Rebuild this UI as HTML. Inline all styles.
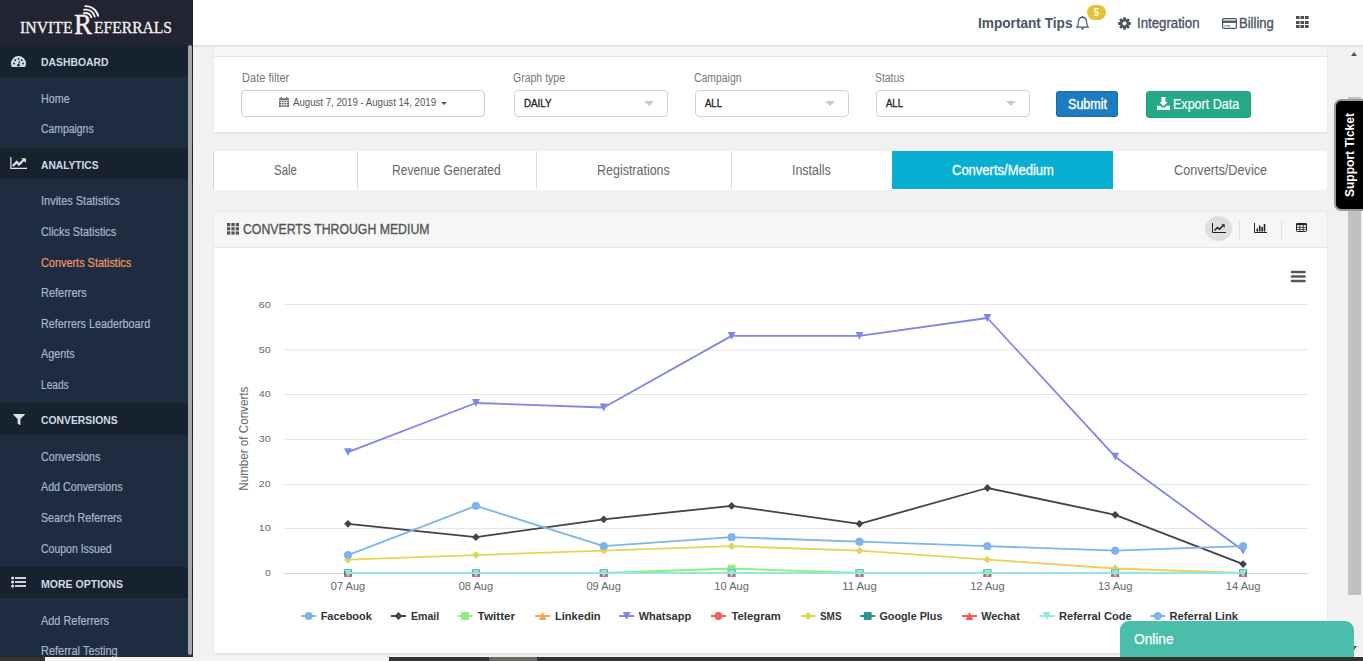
<!DOCTYPE html>
<html lang="en"><head><meta charset="utf-8"><title>InviteReferrals - Converts Statistics</title>
<style>
html,body{margin:0;padding:0}
body{width:1363px;height:661px;overflow:hidden;background:#f1f1f1;position:relative;font-family:'Liberation Sans',sans-serif;}
.abs{position:absolute}
.t{position:absolute;height:0;line-height:0;white-space:nowrap;transform-origin:0 0;display:block}
#sidebar{position:absolute;left:0;top:0;width:193px;height:657px;background:#1e2c3f;overflow:hidden}
#sidebar .logo{position:absolute;left:0;top:0;width:193px;height:45px;background:#222433}
#sidebar .hd{position:absolute;left:0;width:193px;background:#16232f}
#sidebar .thumb{position:absolute;left:188px;top:45px;width:4px;height:610px;background:#a6a6a6;border-radius:2px}
#topbar{position:absolute;left:193px;top:0;width:1170px;height:45px;background:#fff;box-shadow:0 1px 2px rgba(0,0,0,.13)}
.panel{position:absolute;left:214px;width:1113px;background:#fff;box-shadow:0 1px 2px rgba(0,0,0,.09)}
.phead{position:absolute;left:0;top:0;width:100%;background:#f5f6f6;border-bottom:1px solid #e4e5e5;box-sizing:border-box}
.sel{position:absolute;top:90px;height:27px;width:154px;box-sizing:border-box;border:1px solid #c9d3e6;border-radius:4px;background:#fff}
.sel i{position:absolute;right:13px;top:10px;width:0;height:0;border-left:5.5px solid transparent;border-right:5.5px solid transparent;border-top:5px solid #c3c8d2}
.btn{position:absolute;border-radius:3px;box-sizing:border-box}
.tab{position:absolute;top:0;height:38px;box-sizing:border-box;border-left:1px solid #dcdcdc}
#tabs .tab:first-child{border-left:none}
</style></head>
<body>
<div class="panel" style="top:21px;height:111px"><div class="phead" style="height:36px"></div></div>
<span class="t" style="left:241.5px;top:78px;font-size:12px;color:#777;transform:scaleX(0.9211);">Date filter</span><span class="t" style="left:513.0px;top:78px;font-size:12px;color:#777;transform:scaleX(0.8759);">Graph type</span><span class="t" style="left:693.8px;top:78px;font-size:12px;color:#777;transform:scaleX(0.8684);">Campaign</span><span class="t" style="left:874.5px;top:78px;font-size:12px;color:#777;transform:scaleX(0.8671);">Status</span><div class="abs" style="left:241px;top:90px;width:244px;height:27px;box-sizing:border-box;border:1px solid #ccc;border-radius:4px;background:#fff"></div><svg class="abs" style="left:279px;top:97px" width="10" height="10" viewBox="0 0 10 10"><path d="M0 1.300h10V10H0z" fill="#666"/><path d="M1.800 0h1.200v2.400H1.800zM7 0h1.200v2.400H7z" fill="#666"/><g stroke="#fff" stroke-width=".7"><path d="M0 3.400h10M.6 5.500h8.800M.6 7.700h8.800M2.700 3.400V10M5 3.400V10M7.300 3.400V10"/></g></svg><span class="t" style="left:293.0px;top:102px;font-size:11px;color:#555;transform:scaleX(0.8757);">August 7, 2019 - August 14, 2019</span><div class="abs" style="left:440.500px;top:101.500px;width:0;height:0;border-left:3px solid transparent;border-right:3px solid transparent;border-top:3px solid #555"></div><div class="sel" style="left:514px"><i></i></div><span class="t" style="left:524.4px;top:104px;font-size:10px;color:#222;transform:scaleX(0.9766);-webkit-text-stroke:0.3px #222;">DAILY</span><div class="sel" style="left:695px"><i></i></div><span class="t" style="left:705.4px;top:104px;font-size:10px;color:#222;transform:scaleX(0.9554);-webkit-text-stroke:0.3px #222;">ALL</span><div class="sel" style="left:876px"><i></i></div><span class="t" style="left:886.4px;top:104px;font-size:10px;color:#222;transform:scaleX(0.9554);-webkit-text-stroke:0.3px #222;">ALL</span><div class="btn" style="left:1056px;top:91px;width:62px;height:26px;background:#1d7bbf;border:1px dashed #1a5f96"></div><span class="t" style="left:1067.6px;top:104px;font-size:14px;color:#fff;transform:scaleX(0.8974);-webkit-text-stroke:0.4px #fff;">Submit</span><div class="btn" style="left:1146px;top:91px;width:105px;height:27px;background:#26a987;border:1px solid #23a07f"></div><svg class="abs" style="left:1157px;top:97px" width="13" height="13" viewBox="0 0 13 13"><path d="M4.500 0h4v4.900h2.200L6.500 9.300 2.300 4.900h2.200z" fill="#fff"/><path d="M0 8.800h3.300l1.700 1.700h3l1.700-1.700H13V13H0z" fill="#fff"/></svg><span class="t" style="left:1173.0px;top:104px;font-size:15px;color:#fff;transform:scaleX(0.8358);-webkit-text-stroke:0.2px #fff;">Export Data</span><div class="panel" id="tabs" style="top:151px;height:39px;border-radius:0 4px 4px 0;box-shadow:none;border-left:1px solid #d6d6d6;left:213px"><div class="tab" style="left:0px;width:143px;"></div><div class="tab" style="left:143px;width:179px;"></div><div class="tab" style="left:322px;width:195px;"></div><div class="tab" style="left:517px;width:161px;"></div><div class="tab" style="left:678px;width:221px;background:#09afd3;border-left:none;"></div><div class="tab" style="left:899px;width:214px;border-left:none;"></div></div>
<span class="t" style="left:273.6px;top:170px;font-size:14px;color:#666;transform:scaleX(0.8173);">Sale</span><span class="t" style="left:392.0px;top:170px;font-size:14px;color:#666;transform:scaleX(0.8613);">Revenue Generated</span><span class="t" style="left:596.9px;top:170px;font-size:14px;color:#666;transform:scaleX(0.8910);">Registrations</span><span class="t" style="left:791.8px;top:170px;font-size:14px;color:#666;transform:scaleX(0.8882);">Installs</span><span class="t" style="left:951.9px;top:170px;font-size:14px;color:#fff;transform:scaleX(0.9289);-webkit-text-stroke:0.3px #fff;">Converts/Medium</span><span class="t" style="left:1174.3px;top:170px;font-size:14px;color:#666;transform:scaleX(0.9065);">Converts/Device</span><div class="panel" id="chartpanel" style="top:211px;height:442px"><div class="phead" style="height:37px;border-top:1px solid #e9eaea"></div></div>
<svg class="abs" style="left:227px;top:222.800px" width="12" height="12" viewBox="0 0 12 12"><g fill="#555"><rect x="0" y="0" width="3.300" height="3.200"/><rect x="4.350" y="0" width="3.300" height="3.200"/><rect x="8.700" y="0" width="3.300" height="3.200"/><rect x="0" y="4.200" width="3.300" height="3.200"/><rect x="4.350" y="4.200" width="3.300" height="3.200"/><rect x="8.700" y="4.200" width="3.300" height="3.200"/><rect x="0" y="8.400" width="3.300" height="3.200"/><rect x="4.350" y="8.400" width="3.300" height="3.200"/><rect x="8.700" y="8.400" width="3.300" height="3.200"/></g></svg><span class="t" style="left:243.0px;top:229px;font-size:14px;color:#555;transform:scaleX(0.8772);-webkit-text-stroke:0.35px #555;">CONVERTS THROUGH MEDIUM</span><div class="abs" style="left:1205px;top:216px;width:27px;height:25px;border-radius:50%;background:#dfdfdf"></div><svg class="abs" style="left:1212px;top:223px" width="14" height="10" viewBox="0 0 14 10"><path d="M.5 0v9.500H14" fill="none" stroke="#222" stroke-width="1"/><path d="M2.500 7.500l3-3 2 1.800 3.400-3.500" fill="none" stroke="#222" stroke-width="1.500"/><path d="M9.300 1.300h3.400v3.400z" fill="#222"/></svg><div class="abs" style="left:1239px;top:221px;width:1px;height:18px;background:#dddfe5"></div><svg class="abs" style="left:1254px;top:223px" width="13" height="10" viewBox="0 0 13 10"><path d="M.5 0v9.500H13" fill="none" stroke="#222" stroke-width="1"/><g fill="#222"><rect x="2.500" y="5.500" width="1.600" height="3"/><rect x="4.900" y="2.500" width="1.600" height="6"/><rect x="7.300" y="4" width="1.600" height="4.500"/><rect x="9.700" y="1" width="1.600" height="7.500"/></g></svg><div class="abs" style="left:1281px;top:221px;width:1px;height:18px;background:#dddfe5"></div><svg class="abs" style="left:1296px;top:223px" width="11" height="9" viewBox="0 0 11 9"><rect x=".5" y=".5" width="10" height="8" rx=".8" fill="#fff" stroke="#222" stroke-width="1"/><path d="M0 .5h11v1.600H0z" fill="#222"/><path d="M.5 4.300h10M.5 6.400h10M3.800 2V8.500M7.200 2V8.500" stroke="#222" stroke-width=".8" fill="none"/></svg><svg class="abs" id="chart" style="left:214px;top:248px" width="1113" height="405" viewBox="214 248 1113 405" font-family="Liberation Sans, sans-serif"><path d="M284 528.5H1308" stroke="#e6e6e6" stroke-width="1"/><path d="M284 484.5H1308" stroke="#e6e6e6" stroke-width="1"/><path d="M284 439.4H1308" stroke="#e6e6e6" stroke-width="1"/><path d="M284 394.5H1308" stroke="#e6e6e6" stroke-width="1"/><path d="M284 349.9H1308" stroke="#e6e6e6" stroke-width="1"/><path d="M284 304.5H1308" stroke="#e6e6e6" stroke-width="1"/><path d="M284 573.5H1308" stroke="#ccd6eb" stroke-width="1"/><text x="270.6" y="575.8" text-anchor="end" font-size="9.600" fill="#666" textLength="5.7" lengthAdjust="spacingAndGlyphs">0</text><text x="270.6" y="530.9" text-anchor="end" font-size="9.600" fill="#666" textLength="11.9" lengthAdjust="spacingAndGlyphs">10</text><text x="270.6" y="486.9" text-anchor="end" font-size="9.600" fill="#666" textLength="11.9" lengthAdjust="spacingAndGlyphs">20</text><text x="270.6" y="441.9" text-anchor="end" font-size="9.600" fill="#666" textLength="11.9" lengthAdjust="spacingAndGlyphs">30</text><text x="270.6" y="396.9" text-anchor="end" font-size="9.600" fill="#666" textLength="11.9" lengthAdjust="spacingAndGlyphs">40</text><text x="270.6" y="352.8" text-anchor="end" font-size="9.600" fill="#666" textLength="11.9" lengthAdjust="spacingAndGlyphs">50</text><text x="270.6" y="307.7" text-anchor="end" font-size="9.600" fill="#666" textLength="11.9" lengthAdjust="spacingAndGlyphs">60</text><text transform="translate(247.8 438.7) rotate(-90)" text-anchor="middle" font-size="12" fill="#666" textLength="104.0" lengthAdjust="spacingAndGlyphs">Number of Converts</text><text x="348.0" y="590.4" text-anchor="middle" font-size="10" fill="#666" textLength="34.5" lengthAdjust="spacingAndGlyphs">07 Aug</text><text x="475.9" y="590.4" text-anchor="middle" font-size="10" fill="#666" textLength="34.5" lengthAdjust="spacingAndGlyphs">08 Aug</text><text x="603.7" y="590.4" text-anchor="middle" font-size="10" fill="#666" textLength="34.5" lengthAdjust="spacingAndGlyphs">09 Aug</text><text x="731.6" y="590.4" text-anchor="middle" font-size="10" fill="#666" textLength="34.5" lengthAdjust="spacingAndGlyphs">10 Aug</text><text x="859.5" y="590.4" text-anchor="middle" font-size="10" fill="#666" textLength="34.5" lengthAdjust="spacingAndGlyphs">11 Aug</text><text x="987.4" y="590.4" text-anchor="middle" font-size="10" fill="#666" textLength="34.5" lengthAdjust="spacingAndGlyphs">12 Aug</text><text x="1115.2" y="590.4" text-anchor="middle" font-size="10" fill="#666" textLength="34.5" lengthAdjust="spacingAndGlyphs">13 Aug</text><text x="1243.1" y="590.4" text-anchor="middle" font-size="10" fill="#666" textLength="34.5" lengthAdjust="spacingAndGlyphs">14 Aug</text><g><circle cx="348.0" cy="555.1" r="3.9" fill="#7cb5ec"/><circle cx="475.9" cy="505.9" r="3.9" fill="#7cb5ec"/><circle cx="603.7" cy="546.2" r="3.9" fill="#7cb5ec"/><circle cx="731.6" cy="537.2" r="3.9" fill="#7cb5ec"/><circle cx="859.5" cy="541.7" r="3.9" fill="#7cb5ec"/><circle cx="987.4" cy="546.2" r="3.9" fill="#7cb5ec"/><circle cx="1115.2" cy="550.6" r="3.9" fill="#7cb5ec"/><circle cx="1243.1" cy="546.2" r="3.9" fill="#7cb5ec"/></g><g><path d="M348.0 523.8L475.9 537.2M475.9 537.2L603.7 519.3M603.7 519.3L731.6 505.9M731.6 505.9L859.5 523.8M859.5 523.8L987.4 488.0M987.4 488.0L1115.2 514.8M1115.2 514.8L1243.1 564.1" fill="none" stroke="#434348" stroke-width="1.800" stroke-linejoin="round" stroke-linecap="round"/><path d="M348.0 519.9L351.9 523.8L348.0 527.7L344.1 523.8Z" fill="#434348"/><path d="M475.9 533.3L479.8 537.2L475.9 541.1L472.0 537.2Z" fill="#434348"/><path d="M603.7 515.4L607.6 519.3L603.7 523.2L599.8 519.3Z" fill="#434348"/><path d="M731.6 502.0L735.5 505.9L731.6 509.8L727.7 505.9Z" fill="#434348"/><path d="M859.5 519.9L863.4 523.8L859.5 527.7L855.6 523.8Z" fill="#434348"/><path d="M987.4 484.1L991.2 488.0L987.4 491.9L983.5 488.0Z" fill="#434348"/><path d="M1115.2 510.9L1119.1 514.8L1115.2 518.7L1111.3 514.8Z" fill="#434348"/><path d="M1243.1 560.2L1247.0 564.1L1243.1 568.0L1239.2 564.1Z" fill="#434348"/></g><g><path d="M603.7 573.0L731.6 568.5M731.6 568.5L859.5 573.0" fill="none" stroke="#90ed7d" stroke-width="1.800" stroke-linejoin="round" stroke-linecap="round"/><rect x="344.1" y="569.1" width="7.8" height="7.8" fill="#90ed7d"/><rect x="472.0" y="569.1" width="7.8" height="7.8" fill="#90ed7d"/><rect x="599.8" y="569.1" width="7.8" height="7.8" fill="#90ed7d"/><rect x="727.7" y="564.6" width="7.8" height="7.8" fill="#90ed7d"/><rect x="855.6" y="569.1" width="7.8" height="7.8" fill="#90ed7d"/><rect x="983.5" y="569.1" width="7.8" height="7.8" fill="#90ed7d"/><rect x="1111.3" y="569.1" width="7.8" height="7.8" fill="#90ed7d"/><rect x="1239.2" y="569.1" width="7.8" height="7.8" fill="#90ed7d"/></g><g><path d="M348.0 569.1L351.9 576.9L344.1 576.9Z" fill="#f7a35c"/><path d="M475.9 569.1L479.8 576.9L472.0 576.9Z" fill="#f7a35c"/><path d="M603.7 569.1L607.6 576.9L599.8 576.9Z" fill="#f7a35c"/><path d="M731.6 569.1L735.5 576.9L727.7 576.9Z" fill="#f7a35c"/><path d="M859.5 569.1L863.4 576.9L855.6 576.9Z" fill="#f7a35c"/><path d="M987.4 569.1L991.2 576.9L983.5 576.9Z" fill="#f7a35c"/><path d="M1115.2 569.1L1119.1 576.9L1111.3 576.9Z" fill="#f7a35c"/><path d="M1243.1 569.1L1247.0 576.9L1239.2 576.9Z" fill="#f7a35c"/></g><g><path d="M348.0 452.2L475.9 403.0M475.9 403.0L603.7 407.5M603.7 407.5L731.6 335.9M731.6 335.9L859.5 335.9M859.5 335.9L987.4 318.0M987.4 318.0L1115.2 456.7M1115.2 456.7L1243.1 550.6" fill="none" stroke="#8085e9" stroke-width="1.800" stroke-linejoin="round" stroke-linecap="round"/><path d="M344.1 448.3L351.9 448.3L348.0 456.1Z" fill="#8085e9"/><path d="M472.0 399.1L479.8 399.1L475.9 406.9Z" fill="#8085e9"/><path d="M599.8 403.6L607.6 403.6L603.7 411.4Z" fill="#8085e9"/><path d="M727.7 332.0L735.5 332.0L731.6 339.8Z" fill="#8085e9"/><path d="M855.6 332.0L863.4 332.0L859.5 339.8Z" fill="#8085e9"/><path d="M983.5 314.1L991.2 314.1L987.4 321.9Z" fill="#8085e9"/><path d="M1111.3 452.8L1119.1 452.8L1115.2 460.6Z" fill="#8085e9"/><path d="M1239.2 546.7L1247.0 546.7L1243.1 554.5Z" fill="#8085e9"/></g><g><circle cx="348.0" cy="573.0" r="3.9" fill="#ef6062"/><circle cx="475.9" cy="573.0" r="3.9" fill="#ef6062"/><circle cx="603.7" cy="573.0" r="3.9" fill="#ef6062"/><circle cx="731.6" cy="573.0" r="3.9" fill="#ef6062"/><circle cx="859.5" cy="573.0" r="3.9" fill="#ef6062"/><circle cx="987.4" cy="573.0" r="3.9" fill="#ef6062"/><circle cx="1115.2" cy="573.0" r="3.9" fill="#ef6062"/><circle cx="1243.1" cy="573.0" r="3.9" fill="#ef6062"/></g><g><path d="M348.0 559.6L475.9 555.1M475.9 555.1L603.7 550.6M603.7 550.6L731.6 546.2M731.6 546.2L859.5 550.6M859.5 550.6L987.4 559.6M987.4 559.6L1115.2 568.5M1115.2 568.5L1243.1 573.0" fill="none" stroke="#e4d354" stroke-width="1.800" stroke-linejoin="round" stroke-linecap="round"/><path d="M348.0 555.7L351.9 559.6L348.0 563.5L344.1 559.6Z" fill="#e4d354"/><path d="M475.9 551.2L479.8 555.1L475.9 559.0L472.0 555.1Z" fill="#e4d354"/><path d="M603.7 546.7L607.6 550.6L603.7 554.5L599.8 550.6Z" fill="#e4d354"/><path d="M731.6 542.3L735.5 546.2L731.6 550.1L727.7 546.2Z" fill="#e4d354"/><path d="M859.5 546.7L863.4 550.6L859.5 554.5L855.6 550.6Z" fill="#e4d354"/><path d="M987.4 555.7L991.2 559.6L987.4 563.5L983.5 559.6Z" fill="#e4d354"/><path d="M1115.2 564.6L1119.1 568.5L1115.2 572.4L1111.3 568.5Z" fill="#e4d354"/><path d="M1243.1 569.1L1247.0 573.0L1243.1 576.9L1239.2 573.0Z" fill="#e4d354"/></g><g><rect x="344.1" y="569.1" width="7.8" height="7.8" fill="#2b908f"/><rect x="472.0" y="569.1" width="7.8" height="7.8" fill="#2b908f"/><rect x="599.8" y="569.1" width="7.8" height="7.8" fill="#2b908f"/><rect x="727.7" y="569.1" width="7.8" height="7.8" fill="#2b908f"/><rect x="855.6" y="569.1" width="7.8" height="7.8" fill="#2b908f"/><rect x="983.5" y="569.1" width="7.8" height="7.8" fill="#2b908f"/><rect x="1111.3" y="569.1" width="7.8" height="7.8" fill="#2b908f"/><rect x="1239.2" y="569.1" width="7.8" height="7.8" fill="#2b908f"/></g><g><path d="M348.0 569.1L351.9 576.9L344.1 576.9Z" fill="#f45b5b"/><path d="M475.9 569.1L479.8 576.9L472.0 576.9Z" fill="#f45b5b"/><path d="M603.7 569.1L607.6 576.9L599.8 576.9Z" fill="#f45b5b"/><path d="M731.6 569.1L735.5 576.9L727.7 576.9Z" fill="#f45b5b"/><path d="M859.5 569.1L863.4 576.9L855.6 576.9Z" fill="#f45b5b"/><path d="M987.4 569.1L991.2 576.9L983.5 576.9Z" fill="#f45b5b"/><path d="M1115.2 569.1L1119.1 576.9L1111.3 576.9Z" fill="#f45b5b"/><path d="M1243.1 569.1L1247.0 576.9L1239.2 576.9Z" fill="#f45b5b"/></g><g><path d="M348.0 573.0L475.9 573.0M475.9 573.0L603.7 573.0M603.7 573.0L731.6 573.0M731.6 573.0L859.5 573.0M859.5 573.0L987.4 573.0M987.4 573.0L1115.2 573.0M1115.2 573.0L1243.1 573.0" fill="none" stroke="#91e8e1" stroke-width="1.800" stroke-linejoin="round" stroke-linecap="round"/><path d="M344.0 569.6L352.0 569.6L348.0 577.2Z" fill="#91e8e1"/><path d="M471.9 569.6L479.9 569.6L475.9 577.2Z" fill="#91e8e1"/><path d="M599.7 569.6L607.7 569.6L603.7 577.2Z" fill="#91e8e1"/><path d="M727.6 569.6L735.6 569.6L731.6 577.2Z" fill="#91e8e1"/><path d="M855.5 569.6L863.5 569.6L859.5 577.2Z" fill="#91e8e1"/><path d="M983.4 569.6L991.4 569.6L987.4 577.2Z" fill="#91e8e1"/><path d="M1111.2 569.6L1119.2 569.6L1115.2 577.2Z" fill="#91e8e1"/><path d="M1239.1 569.6L1247.1 569.6L1243.1 577.2Z" fill="#91e8e1"/></g><g><path d="M348.0 555.1L475.9 505.9M475.9 505.9L603.7 546.2M603.7 546.2L731.6 537.2M731.6 537.2L859.5 541.7M859.5 541.7L987.4 546.2M987.4 546.2L1115.2 550.6M1115.2 550.6L1243.1 546.2" fill="none" stroke="#7cb5ec" stroke-width="1.800" stroke-linejoin="round" stroke-linecap="round"/><circle cx="348.0" cy="555.1" r="3.9" fill="#7cb5ec"/><circle cx="475.9" cy="505.9" r="3.9" fill="#7cb5ec"/><circle cx="603.7" cy="546.2" r="3.9" fill="#7cb5ec"/><circle cx="731.6" cy="537.2" r="3.9" fill="#7cb5ec"/><circle cx="859.5" cy="541.7" r="3.9" fill="#7cb5ec"/><circle cx="987.4" cy="546.2" r="3.9" fill="#7cb5ec"/><circle cx="1115.2" cy="550.6" r="3.9" fill="#7cb5ec"/><circle cx="1243.1" cy="546.2" r="3.9" fill="#7cb5ec"/></g><path d="M301.2 616H316.2" stroke="#7cb5ec" stroke-width="2"/><circle cx="308.7" cy="616.0" r="3.9" fill="#7cb5ec"/><text x="320.7" y="620" font-size="11.500" font-weight="700" fill="#333" textLength="51.1" lengthAdjust="spacingAndGlyphs">Facebook</text><path d="M391.0 616H406.0" stroke="#434348" stroke-width="2"/><path d="M398.5 612.1L402.4 616.0L398.5 619.9L394.6 616.0Z" fill="#434348"/><text x="411" y="620" font-size="11.500" font-weight="700" fill="#333" textLength="28.2" lengthAdjust="spacingAndGlyphs">Email</text><path d="M457.6 616H472.6" stroke="#90ed7d" stroke-width="2"/><rect x="461.2" y="612.1" width="7.8" height="7.8" fill="#90ed7d"/><text x="477.6" y="620" font-size="11.500" font-weight="700" fill="#333" textLength="37.6" lengthAdjust="spacingAndGlyphs">Twitter</text><path d="M535.2 616H550.2" stroke="#f7a35c" stroke-width="2"/><path d="M542.7 612.1L546.6 619.9L538.8 619.9Z" fill="#f7a35c"/><text x="554.9" y="620" font-size="11.500" font-weight="700" fill="#333" textLength="45.7" lengthAdjust="spacingAndGlyphs">Linkedin</text><path d="M619.2 616H634.2" stroke="#8085e9" stroke-width="2"/><path d="M622.8 612.1L630.6 612.1L626.7 619.9Z" fill="#8085e9"/><text x="638.7" y="620" font-size="11.500" font-weight="700" fill="#333" textLength="52.4" lengthAdjust="spacingAndGlyphs">Whatsapp</text><path d="M711.0 616H726.0" stroke="#ef6062" stroke-width="2"/><circle cx="718.5" cy="616.0" r="3.9" fill="#ef6062"/><text x="731.5" y="620" font-size="11.500" font-weight="700" fill="#333" textLength="49.4" lengthAdjust="spacingAndGlyphs">Telegram</text><path d="M800.8 616H815.8" stroke="#e4d354" stroke-width="2"/><path d="M808.3 612.1L812.2 616.0L808.3 619.9L804.4 616.0Z" fill="#e4d354"/><text x="820" y="620" font-size="11.500" font-weight="700" fill="#333" textLength="21.5" lengthAdjust="spacingAndGlyphs">SMS</text><path d="M860.2 616H875.2" stroke="#2b908f" stroke-width="2"/><rect x="863.8" y="612.1" width="7.8" height="7.8" fill="#2b908f"/><text x="879.4" y="620" font-size="11.500" font-weight="700" fill="#333" textLength="63.1" lengthAdjust="spacingAndGlyphs">Google Plus</text><path d="M962.0 616H977.0" stroke="#f45b5b" stroke-width="2"/><path d="M969.5 612.1L973.4 619.9L965.6 619.9Z" fill="#f45b5b"/><text x="981.2" y="620" font-size="11.500" font-weight="700" fill="#333" textLength="38.6" lengthAdjust="spacingAndGlyphs">Wechat</text><path d="M1039.3 616H1054.3" stroke="#91e8e1" stroke-width="2"/><path d="M1042.9 612.1L1050.7 612.1L1046.8 619.9Z" fill="#91e8e1"/><text x="1059" y="620" font-size="11.500" font-weight="700" fill="#333" textLength="72.6" lengthAdjust="spacingAndGlyphs">Referral Code</text><path d="M1150.3 616H1165.3" stroke="#7cb5ec" stroke-width="2"/><circle cx="1157.8" cy="616.0" r="3.9" fill="#7cb5ec"/><text x="1169.5" y="620" font-size="11.500" font-weight="700" fill="#333" textLength="68.5" lengthAdjust="spacingAndGlyphs">Referral Link</text><path d="M1292 272H1304.500M1292 276.500H1304.500M1292 281H1304.500" stroke="#5a5758" stroke-width="2.700" stroke-linecap="round"/></svg>
<div id="topbar"></div>
<span class="t" style="left:977.8px;top:23px;font-size:14px;color:#4b5563;font-weight:700;transform:scaleX(0.9745);">Important Tips</span><svg class="abs" style="left:1076px;top:15.500px" width="13" height="15" viewBox="0 0 13 15"><path d="M6.500 1.300c-2.600 0-4 2-4 4.300 0 3.300-.9 4.700-1.900 5.600h11.800c-1-.9-1.900-2.300-1.900-5.600 0-2.300-1.400-4.300-4-4.300z" fill="none" stroke="#4b5563" stroke-width="1.200" stroke-linejoin="round"/><path d="M6.500 0v1.300" stroke="#4b5563" stroke-width="1.400"/><path d="M5 12.300a1.500 1.500 0 0 0 3 0z" fill="#4b5563"/></svg><div class="abs" style="left:1087px;top:5px;width:19px;height:15px;border-radius:8px;background:#e6c037"></div><span class="t" style="left:1093.5px;top:13px;font-size:10px;color:#fff;font-weight:700;transform:scaleX(0.8990);">5</span><svg class="abs" style="left:1118px;top:17px" width="13" height="13" viewBox="0 0 13 13"><g transform="translate(6.500 6.500)"><g fill="#4b5563"><rect x="-1.400" y="-6.300" width="2.800" height="12.600" rx=".5"/><rect x="-1.400" y="-6.300" width="2.800" height="12.600" rx=".5" transform="rotate(45)"/><rect x="-1.400" y="-6.300" width="2.800" height="12.600" rx=".5" transform="rotate(90)"/><rect x="-1.400" y="-6.300" width="2.800" height="12.600" rx=".5" transform="rotate(135)"/><circle r="4.600"/></g><circle r="2.100" fill="#fff"/></g></svg><span class="t" style="left:1137.1px;top:23px;font-size:14px;color:#4b5563;transform:scaleX(0.9447);-webkit-text-stroke:0.35px #4b5563;">Integration</span><svg class="abs" style="left:1222px;top:18px" width="15" height="11" viewBox="0 0 15 11"><rect x=".6" y=".6" width="13.800" height="9.800" rx="1.200" fill="#fff" stroke="#4b5563" stroke-width="1.200"/><rect x=".6" y="2.600" width="13.800" height="2.300" fill="#4b5563"/><rect x="2.300" y="7.300" width="2" height="1" fill="#4b5563"/><rect x="5" y="7.300" width="3" height="1" fill="#4b5563"/></svg><span class="t" style="left:1239.0px;top:23px;font-size:14px;color:#4b5563;transform:scaleX(0.9317);-webkit-text-stroke:0.35px #4b5563;">Billing</span><svg class="abs" style="left:1296.200px;top:16px" width="13" height="12" viewBox="0 0 13 12"><g fill="#4d4d4d"><rect x="0" y="0" width="3.600" height="3"/><rect x="4.5" y="0" width="3.600" height="3"/><rect x="9" y="0" width="3.600" height="3"/><rect x="0" y="5" width="3.600" height="3"/><rect x="4.5" y="5" width="3.600" height="3"/><rect x="9" y="5" width="3.600" height="3"/><rect x="0" y="9" width="3.600" height="3"/><rect x="4.5" y="9" width="3.600" height="3"/><rect x="9" y="9" width="3.600" height="3"/></g></svg><div id="sidebar"><div class="logo"></div><div class="hd" style="top:45px;height:32px"></div><div class="hd" style="top:148px;height:31px"></div><div class="hd" style="top:403px;height:32px"></div><div class="hd" style="top:567px;height:31px"></div><span class="t" style="left:19.7px;top:28px;font-size:16px;color:#f4f2ee;font-family:'Liberation Serif',serif;transform:scaleX(0.9866);-webkit-text-stroke:0.3px #f4f2ee;">INVITE</span><span class="t" style="left:74.3px;top:23.5px;font-size:29px;color:#f4f2ee;font-family:'Liberation Serif',serif;transform:scaleX(0.9306);-webkit-text-stroke:0.4px #f4f2ee;">R</span><span class="t" style="left:93.6px;top:28px;font-size:16px;color:#f4f2ee;font-family:'Liberation Serif',serif;transform:scaleX(0.9748);-webkit-text-stroke:0.3px #f4f2ee;">EFERRALS</span><svg class="abs" style="left:78px;top:2px" width="24" height="18" viewBox="78 2 24 18"><g fill="none" stroke="#f4f2ee" stroke-width="1.900" stroke-linecap="round"><path d="M85.35 6.12A12.4 12.4 0 0 1 98.13 15.92"/><path d="M84.15 9.79A8.9 8.9 0 0 1 94.71 16.65"/><path d="M83.76 13.48A5.5 5.5 0 0 1 91.36 17.26"/></g></svg><span class="t" style="left:41.3px;top:62px;font-size:11px;color:#d0dae6;font-weight:700;transform:scaleX(0.9441);">DASHBOARD</span><span class="t" style="left:41.3px;top:165px;font-size:11px;color:#d0dae6;font-weight:700;transform:scaleX(0.9284);">ANALYTICS</span><span class="t" style="left:41.3px;top:420px;font-size:11px;color:#d0dae6;font-weight:700;transform:scaleX(0.9423);">CONVERSIONS</span><span class="t" style="left:41.3px;top:584px;font-size:11px;color:#d0dae6;font-weight:700;transform:scaleX(0.9584);">MORE OPTIONS</span><span class="t" style="left:41.3px;top:99px;font-size:12px;color:#a9b5ce;transform:scaleX(0.8935);-webkit-text-stroke:0.2px #a9b5ce;">Home</span><span class="t" style="left:41.3px;top:129px;font-size:12px;color:#a9b5ce;transform:scaleX(0.8666);-webkit-text-stroke:0.2px #a9b5ce;">Campaigns</span><span class="t" style="left:41.3px;top:201px;font-size:12px;color:#a9b5ce;transform:scaleX(0.9148);-webkit-text-stroke:0.2px #a9b5ce;">Invites Statistics</span><span class="t" style="left:41.3px;top:232px;font-size:12px;color:#a9b5ce;transform:scaleX(0.9011);-webkit-text-stroke:0.2px #a9b5ce;">Clicks Statistics</span><span class="t" style="left:41.3px;top:263px;font-size:12px;color:#f4956d;transform:scaleX(0.9078);-webkit-text-stroke:0.2px #f4956d;">Converts Statistics</span><span class="t" style="left:41.3px;top:293px;font-size:12px;color:#a9b5ce;transform:scaleX(0.9138);-webkit-text-stroke:0.2px #a9b5ce;">Referrers</span><span class="t" style="left:41.3px;top:324px;font-size:12px;color:#a9b5ce;transform:scaleX(0.8995);-webkit-text-stroke:0.2px #a9b5ce;">Referrers Leaderboard</span><span class="t" style="left:41.3px;top:354px;font-size:12px;color:#a9b5ce;transform:scaleX(0.8994);-webkit-text-stroke:0.2px #a9b5ce;">Agents</span><span class="t" style="left:41.3px;top:385px;font-size:12px;color:#a9b5ce;transform:scaleX(0.8442);-webkit-text-stroke:0.2px #a9b5ce;">Leads</span><span class="t" style="left:41.3px;top:457px;font-size:12px;color:#a9b5ce;transform:scaleX(0.8891);-webkit-text-stroke:0.2px #a9b5ce;">Conversions</span><span class="t" style="left:41.3px;top:487px;font-size:12px;color:#a9b5ce;transform:scaleX(0.8918);-webkit-text-stroke:0.2px #a9b5ce;">Add Conversions</span><span class="t" style="left:41.3px;top:518px;font-size:12px;color:#a9b5ce;transform:scaleX(0.8855);-webkit-text-stroke:0.2px #a9b5ce;">Search Referrers</span><span class="t" style="left:41.3px;top:549px;font-size:12px;color:#a9b5ce;transform:scaleX(0.8746);-webkit-text-stroke:0.2px #a9b5ce;">Coupon Issued</span><span class="t" style="left:41.3px;top:621px;font-size:12px;color:#a9b5ce;transform:scaleX(0.9104);-webkit-text-stroke:0.2px #a9b5ce;">Add Referrers</span><span class="t" style="left:41.3px;top:651px;font-size:12px;color:#a9b5ce;transform:scaleX(0.9151);-webkit-text-stroke:0.2px #a9b5ce;">Referral Testing</span><svg class="abs" style="left:11px;top:56px" width="15" height="11" viewBox="0 0 15 11"><path d="M7.5 0A7.5 7.5 0 0 0 0 7.5c0 1.3.3 2.4.9 3.5h13.2c.6-1.100.9-2.200.9-3.500A7.500 7.500 0 0 0 7.500 0z" fill="#d0dae6"/><g fill="#16222f"><circle cx="3" cy="7.500" r=".9"/><circle cx="4.300" cy="4.200" r=".9"/><circle cx="7.500" cy="2.800" r=".9"/><circle cx="10.700" cy="4.200" r=".9"/><circle cx="12" cy="7.500" r=".9"/><path d="M7 9.500l1.200-5 .7.200-.9 5z"/><circle cx="7.500" cy="9.300" r="1.300"/></g></svg><svg class="abs" style="left:10px;top:157px" width="17" height="13" viewBox="0 0 17 13"><path d="M.9 0v11.400H17" fill="none" stroke="#dfe3e8" stroke-width="1.200"/><path d="M2.800 9l4-4.100 2.200 2.700 4.600-4.600" fill="none" stroke="#dfe3e8" stroke-width="2.100"/><path d="M11.100 1.200h4.800v4.800z" fill="#dfe3e8"/></svg><svg class="abs" style="left:12.500px;top:413.700px" width="12" height="11.300" viewBox="0 0 12 12" preserveAspectRatio="none"><path d="M.3 0h11.400c.3 0 .4.300.2.500L7.400 5.300v6.300c0 .3-.3.400-.5.300L4.800 10.200c-.1-.1-.2-.2-.2-.4V5.300L.1.500C-.1.300 0 0 .3 0z" fill="#dde1e6"/></svg><svg class="abs" style="left:11px;top:576px" width="15" height="12" viewBox="0 0 15 12"><g fill="#e1e5ea"><circle cx="1.600" cy="2" r="1.500"/><circle cx="1.600" cy="6" r="1.500"/><circle cx="1.600" cy="10" r="1.500"/><rect x="4" y="1.100" width="11" height="1.800"/><rect x="4" y="5.100" width="11" height="1.800"/><rect x="4" y="9.100" width="11" height="1.800"/></g></svg><div class="thumb"></div></div>
<div class="abs" style="left:1346px;top:47px;width:17px;height:610px;background:#f1f1f1"></div><div class="abs" style="left:1348px;top:97px;width:13px;height:498px;background:#c1c1c1"></div><div class="abs" style="left:1351px;top:52px;width:0;height:0;border-left:3.5px solid transparent;border-right:3.5px solid transparent;border-bottom:4px solid #505050"></div><div class="abs" style="left:1351px;top:646px;width:0;height:0;border-left:3.5px solid transparent;border-right:3.5px solid transparent;border-top:4px solid #505050"></div><div class="abs" id="support" style="left:1334px;top:99px;width:31px;height:112px;box-sizing:border-box;background:#000;border:2px solid #9a9a9a;border-right:none;border-radius:7px 0 0 7px"></div><span class="t" style="left:1349.500px;top:197px;font-size:13px;font-weight:700;color:#fff;transform:rotate(-90deg) scaleX(0.9254);line-height:0;height:0">Support Ticket</span><div class="abs" id="online" style="left:1120px;top:621px;width:234px;height:36px;background:#4abdab;border-radius:9px 9px 0 0"></div><span class="t" style="left:1133.8px;top:639px;font-size:15px;color:#fff;transform:scaleX(0.9133);-webkit-text-stroke:0.25px #fff;">Online</span><div class="abs" style="left:0;top:657px;width:1363px;height:4px;background:#333"></div><div class="abs" style="left:45px;top:657px;width:344px;height:4px;background:#f4f4f4"></div><div class="abs" style="left:489px;top:657px;width:48px;height:4px;background:#6b6966"></div></body></html>
